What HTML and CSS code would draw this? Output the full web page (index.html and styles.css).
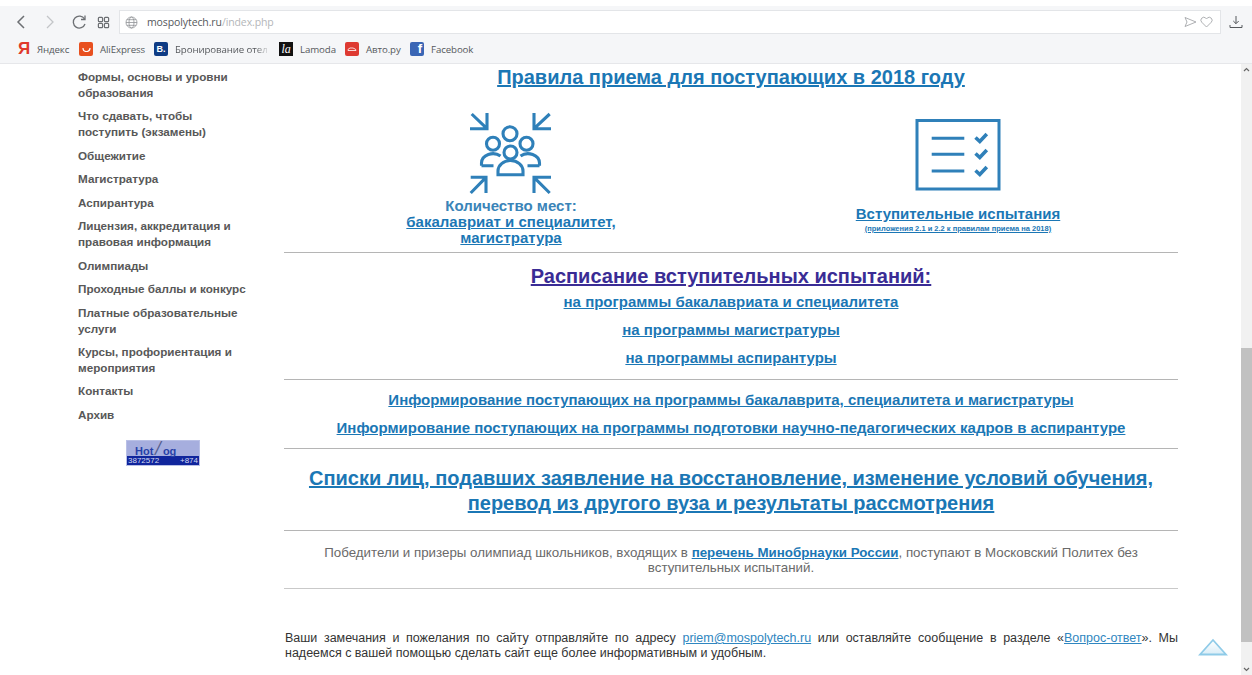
FILE: index.html
```html
<!DOCTYPE html>
<html lang="ru">
<head>
<meta charset="utf-8">
<title>Московский Политех</title>
<link rel="stylesheet" href="styles.css">
</head>
<body>
<header class="browser">
  <div class="toolbar">
    <div class="nav">
      <svg class="nav-icon back" width="12" height="16" viewBox="0 0 12 16"><path d="M9 2 3 8l6 6"/></svg>
      <svg class="nav-icon forward" width="12" height="16" viewBox="0 0 12 16"><path d="M3 2l6 6-6 6"/></svg>
      <svg class="nav-icon reload" width="16" height="16" viewBox="0 0 16 16"><path d="M13.5 5A6 6 0 1 0 14 10"/><path d="M14 1.500V5.500H10"/></svg>
      <svg class="nav-icon tabs" width="13" height="13" viewBox="0 0 14 14"><rect x="1.500" y="1.500" width="4.500" height="4.500" rx="1"/><rect x="8" y="1.500" width="4.500" height="4.500" rx="1"/><rect x="1.500" y="8" width="4.500" height="4.500" rx="1"/><rect x="8" y="8" width="4.500" height="4.500" rx="1"/></svg>
    </div>
    <div class="address">
      <svg class="globe" width="13" height="13" viewBox="0 0 13 13"><circle cx="6.500" cy="6.500" r="5.500"/><ellipse cx="6.500" cy="6.500" rx="2.500" ry="5.500"/><path d="M1 6.500h11M1.800 3.700h9.400M1.800 9.300h9.400"/></svg>
      <span class="url">mospolytech.ru<span class="url-path">/index.php</span></span>
      <svg class="addr-icon" width="13" height="12" viewBox="0 0 13 12"><path d="M1 1.500 12 6 1 10.500 3 6Z"/></svg>
      <svg class="addr-icon" width="13" height="12" viewBox="0 0 13 12"><path d="M6.500 11 1.700 6.200a2.900 2.900 0 0 1 4.100-4.100l.7.700.7-.7a2.900 2.900 0 0 1 4.100 4.100Z"/></svg>
    </div>
    <svg class="download" width="14" height="14" viewBox="0 0 14 14"><path d="M7 1v7.500M4.300 6 7 8.700 9.700 6M1 10v2.500h12V10"/></svg>
  </div>
  <nav class="bookmarks">
    <a class="bookmark"><span class="fav fav-ya">Я</span>Яндекс</a>
    <a class="bookmark"><span class="fav fav-ali"><svg width="9" height="5" viewBox="0 0 9 5"><path d="M1 1a3.500 3.500 0 0 0 7 0"/></svg></span>AliExpress</a>
    <a class="bookmark"><span class="fav fav-booking">B.</span><span class="fade">Бронирование отел</span></a>
    <a class="bookmark"><span class="fav fav-lamoda">la</span>Lamoda</a>
    <a class="bookmark"><span class="fav fav-auto"><svg width="10" height="6" viewBox="0 0 10 6"><path d="M1 4.500V3.400l2-1.400h3l2.500 1.200.5 1.300Z"/></svg></span>Авто.ру</a>
    <a class="bookmark"><span class="fav fav-fb">f</span>Facebook</a>
  </nav>
</header>

<div class="viewport">
  <aside class="sidebar">
    <ul class="menu">
      <li>Формы, основы и уровни образования</li>
      <li>Что сдавать, чтобы поступить (экзамены)</li>
      <li>Общежитие</li>
      <li>Магистратура</li>
      <li>Аспирантура</li>
      <li>Лицензия, аккредитация и правовая информация</li>
      <li>Олимпиады</li>
      <li>Проходные баллы и конкурс</li>
      <li>Платные образовательные услуги</li>
      <li>Курсы, профориентация и мероприятия</li>
      <li>Контакты</li>
      <li>Архив</li>
    </ul>
    <div class="counter">
      <div class="counter-logo"><b>Hot</b><i>/</i><b>og</b></div>
      <div class="counter-stats"><span>3872572</span><span>+874</span></div>
    </div>
  </aside>

  <main class="content">
    <h1 class="title"><a href="#">Правила приема для поступающих в 2018 году</a></h1>

    <section class="cards">
      <div class="card">
        <svg class="card-icon people" width="88" height="86" viewBox="468 112 88 86">
          <path d="M488 115v15.700h-17M488 130.700 472.700 116M535 115v15.700h17M535 130.700 550.700 116M471.700 179.300H487V195M487 179.300 471.700 195M552 179.300H535V195M535 179.300 550.700 195"/>
          <circle cx="511" cy="135.700" r="7"/>
          <circle cx="494" cy="145.700" r="6.500"/>
          <circle cx="527.500" cy="145.700" r="6.500"/>
          <circle cx="511.500" cy="154.500" r="6.500"/>
          <path d="M499 176.700v-3.700a12.500 10.500 0 0 1 25 0v3.700Z"/>
          <path d="M482.500 167.700v-2.700a11.500 9.500 0 0 1 19-7M540.500 167.700v-2.700a11.500 9.500 0 0 0-19-7M482.500 167.700h12M540.500 167.700h-12"/>
        </svg>
        <p class="card-label">Количество мест:</p>
        <a class="card-link" href="#">бакалавриат и специалитет,<br>магистратура</a>
      </div>
      <div class="card card-tests">
        <svg class="card-icon checklist" width="86" height="73" viewBox="914 118 86 73">
          <rect x="916" y="120.500" width="82" height="68.500"/>
          <path d="M930.700 138.300h32.600M930.700 154.300h32.600M930.700 171h32.600"/>
          <path class="ticks" d="M974.500 137.500l4.300 4 7-7.500M974.500 153.500l4.300 4 7-7.500M974.500 170.500l4.300 4 7-7.500"/>
        </svg>
        <a class="tests-link" href="#">Вступительные испытания</a>
        <a class="tests-note" href="#">(приложения 2.1 и 2.2 к правилам приема на 2018)</a>
      </div>
    </section>

    <section class="block schedule">
      <h2 class="title visited"><a href="#">Расписание вступительных испытаний:</a></h2>
      <a class="row-link" href="#">на программы бакалавриата и специалитета</a>
      <a class="row-link" href="#">на программы магистратуры</a>
      <a class="row-link" href="#">на программы аспирантуры</a>
    </section>

    <section class="block notices">
      <a class="row-link" href="#">Информирование поступающих на программы бакалаврита, специалитета и магистратуры</a>
      <a class="row-link" href="#">Информирование поступающих на программы подготовки научно-педагогических кадров в аспирантуре</a>
    </section>

    <section class="block lists">
      <a class="lists-link" href="#">Списки лиц, подавших заявление на восстановление, изменение условий обучения, перевод из другого вуза и результаты рассмотрения</a>
    </section>

    <section class="block winners">
      <p>Победители и призеры олимпиад школьников, входящих в <a href="#">перечень Минобрнауки России</a>, поступают в Московский Политех без вступительных испытаний.</p>
    </section>

    <p class="feedback">Ваши замечания и пожелания по сайту отправляйте по адресу <a href="#">priem@mospolytech.ru</a> или оставляйте сообщение в разделе «<a href="#">Вопрос-ответ</a>». Мы надеемся с вашей помощью сделать сайт еще более информативным и удобным.</p>
  </main>

  <div class="scrollbar">
    <svg class="scroll-arrow" width="7" height="5" viewBox="0 0 7 5"><path d="M1 4 3.500 1.500 6 4"/></svg>
    <div class="scroll-track"><div class="scroll-thumb"></div></div>
    <svg class="scroll-arrow" width="7" height="5" viewBox="0 0 7 5"><path d="M1 1l2.500 2.500L6 1"/></svg>
  </div>

  <svg class="to-top" width="30" height="19" viewBox="0 0 30 19">
    <defs>
      <linearGradient id="to-top-fill" x1="0" y1="0" x2="0" y2="1">
        <stop offset="0" stop-color="#ffffff"/>
        <stop offset="1" stop-color="#d9edf7"/>
      </linearGradient>
    </defs>
    <path d="M15 2 28 16.500H2Z"/>
  </svg>
</div>
</body>
</html>
```
FILE: styles.css
```css
* { box-sizing: border-box; }

html, body {
  margin: 0;
  height: 100%;
  overflow: hidden;
}

body {
  display: flex;
  flex-direction: column;
  background: #fff;
  font-family: "Liberation Sans", Arial, sans-serif;
}

a { color: #1b77b5; }

/* Browser frame */
.browser {
  height: 64px;
  flex: none;
  padding-top: 6px;
  background: linear-gradient(#fff 0, #fff 6px, #f5f6f8 6px);
  border-bottom: 1px solid #e6e7ea;
}

.toolbar {
  display: flex;
  align-items: center;
  height: 32px;
  padding-left: 15px;
}

.nav { display: flex; align-items: center; width: 104px; flex: none; }

.nav-icon { fill: none; stroke: #6c6f73; stroke-width: 1.300; }
.back { margin-right: 17px; stroke-width: 1.500; }
.forward { margin-right: 15px; stroke: #c3c5c8; }
.reload { margin-right: 10px; }

.address {
  display: flex;
  align-items: center;
  flex: 1;
  height: 24px;
  padding: 0 7px 0 5px;
  background: #fff;
  border: 1px solid #e3e5e8;
}

.globe {
  flex: none;
  margin: 0 9px 0 0;
  fill: none;
  stroke: #8f9296;
  stroke-width: 0.800;
}

.url {
  flex: 1;
  font-family: "Open Sans", sans-serif;
  font-size: 10.500px;
  letter-spacing: -0.100px;
  color: #55585c;
}

.url-path { color: #b4b6b9; }

.addr-icon {
  flex: none;
  margin-left: 3px;
  fill: none;
  stroke: #a5a7aa;
  stroke-width: 0.900;
}

.download {
  flex: none;
  margin: 0 9px 0 8px;
  fill: none;
  stroke: #55585c;
  stroke-width: 1;
}

.bookmarks {
  display: flex;
  align-items: center;
  height: 25px;
  padding: 0 0 3px 19px;
}

.bookmark {
  display: flex;
  align-items: center;
  font-family: "Open Sans", sans-serif;
  font-size: 9.700px;
  letter-spacing: -0.100px;
  color: #56595d;
  white-space: nowrap;
}

.bookmark:nth-child(1) { width: 60px; }
.bookmark:nth-child(2) { width: 75px; }
.bookmark:nth-child(3) { width: 125px; }
.bookmark:nth-child(4) { width: 66px; }
.bookmark:nth-child(5) { width: 65px; }

.fade {
  width: 95px;
  overflow: hidden;
  -webkit-mask-image: linear-gradient(90deg, #000 85%, transparent);
  mask-image: linear-gradient(90deg, #000 85%, transparent);
}

.fav {
  display: flex;
  align-items: center;
  justify-content: center;
  flex: none;
  width: 14px;
  height: 14px;
  margin-right: 7px;
  border-radius: 2px;
  color: #fff;
  font-family: "Liberation Sans", sans-serif;
  font-size: 9px;
  font-weight: 700;
}

.fav-ya { width: 10px; margin-right: 8px; color: #e0392b; font-size: 17px; }
.fav-ali { background: #e8501f; }
.fav-ali path { fill: none; stroke: #fff; stroke-width: 1.200; }
.fav-booking { background: #0f3c85; }
.fav-lamoda {
  background: #111;
  font-family: "Liberation Serif", serif;
  font-style: italic;
  font-weight: 400;
  font-size: 12px;
  border-radius: 0;
}
.fav-auto { background: #de3a32; }
.fav-auto path { fill: none; stroke: #fff; stroke-width: 0.800; }
.fav-fb { background: #3a66b5; font-size: 13px; align-items: flex-end; justify-content: flex-end; padding-right: 2px; }

/* Page area */
.viewport {
  position: relative;
  display: flex;
  flex: 1;
  min-height: 0;
}

.sidebar {
  width: 284px;
  flex: none;
  padding: 5px 36px 0 78px;
}

.menu {
  margin: 0;
  padding: 0;
  list-style: none;
  font-size: 11.700px;
  line-height: 16px;
  font-weight: 700;
  color: #585858;
}

.menu li { margin-bottom: 7.450px; }

.counter {
  width: 74px;
  height: 26px;
  margin: 17px 0 0 48px;
  background: #a6aede;
  border: 1px solid #b9c0e6;
}

.counter-logo {
  height: 15px;
  padding-left: 8px;
  font-size: 11px;
  line-height: 15px;
  color: #2741a8;
  white-space: nowrap;
}

.counter-logo i {
  font-family: "Liberation Serif", serif;
  font-size: 20px;
  font-weight: 700;
  line-height: 15px;
  color: #555f8f;
  margin: 0 2px;
}

.counter-stats {
  display: flex;
  justify-content: space-between;
  height: 9px;
  padding: 0 1px;
  background: #10259c;
  color: #d5daf3;
  font-size: 8px;
  line-height: 9px;
}

.content {
  width: 894px;
  flex: none;
  text-align: center;
}

.title {
  margin: 0;
  font-size: 20px;
  line-height: 26px;
  font-weight: 700;
}

.visited a { color: #3a2c95; }

.cards {
  display: grid;
  grid-template-columns: 454px 1fr;
  height: 152px;
  margin-top: 10px;
  padding-top: 10px;
}

.card { display: flex; flex-direction: column; align-items: center; }

.card-icon {
  display: block;
  flex: none;
  fill: none;
  stroke: #2f80b9;
  stroke-width: 3.100;
}

.checklist { stroke-width: 3; }
.ticks { stroke-width: 3.600; }

.card-label,
.card-link {
  margin: 0;
  font-size: 15px;
  line-height: 16px;
  font-weight: 700;
  color: #3a84b8;
}

.card-label { margin-top: 2px; }
.card-link { color: #1b77b5; }

.card-tests { padding: 8px 0 0 0; }

.tests-link {
  margin-top: 14px;
  font-size: 15px;
  line-height: 17px;
  font-weight: 700;
}

.tests-note {
  margin-top: 2px;
  font-size: 7.500px;
  line-height: 9px;
  font-weight: 700;
}

.block { border-top: 1px solid #b5b5b5; }

.row-link {
  display: block;
  font-size: 15px;
  line-height: 18px;
  font-weight: 700;
  margin-bottom: 10px;
}

.schedule { height: 127px; padding-top: 11px; }
.schedule .title { line-height: 24px; margin-bottom: 5px; }

.notices { height: 69px; padding-top: 11px; }

.lists { height: 82px; padding-top: 17px; }

.lists-link {
  display: block;
  font-size: 20px;
  line-height: 25px;
  font-weight: 700;
}

.winners { height: 58px; padding: 14px 30px 0; }

.winners p {
  margin: 0;
  font-size: 13.340px;
  line-height: 15px;
  color: #6a6a6a;
}

.winners a { font-weight: 700; }

.feedback {
  margin: 0;
  padding: 42px 0 0 1px;
  border-top: 1px solid #c9c9c9;
  font-size: 12.500px;
  line-height: 15px;
  text-align: justify;
  color: #333;
}

.feedback a { color: #2f86c0; }

/* Scrollbar on the far right */
.scrollbar {
  position: absolute;
  top: 0;
  right: 0;
  bottom: 0;
  display: flex;
  flex-direction: column;
  align-items: center;
  width: 11px;
  background: #f1f1f1;
}

.scroll-arrow {
  flex: none;
  margin: 3px 0;
  fill: none;
  stroke: #666;
  stroke-width: 1.200;
}

.scroll-track { flex: 1; width: 100%; padding-top: 273px; }
.scroll-thumb { height: 294px; background: #c1c1c1; }

.to-top {
  position: absolute;
  left: 1198px;
  bottom: 18px;
  fill: url(#to-top-fill);
  stroke: #8fcbe8;
  stroke-width: 1.800;
}
```
